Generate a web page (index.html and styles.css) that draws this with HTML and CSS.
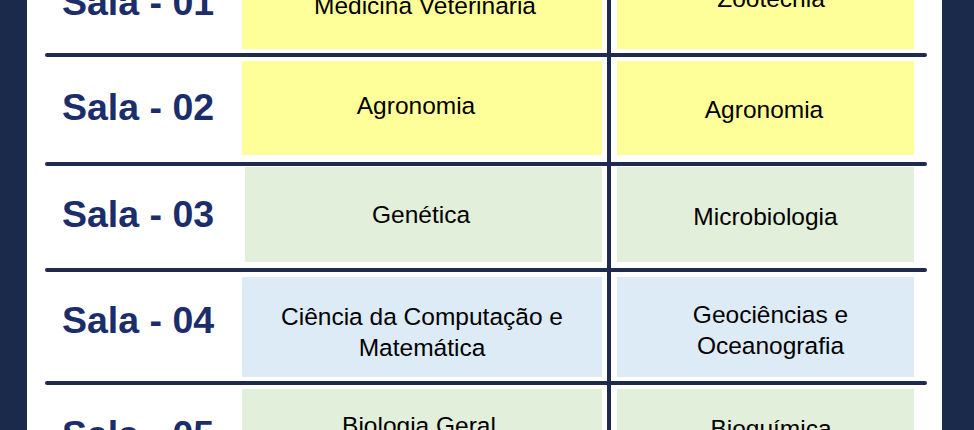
FILE: index.html
```html
<!DOCTYPE html>
<html lang="pt-BR">
<head>
<meta charset="utf-8">
<title>Salas</title>
<link rel="stylesheet" href="styles.css">
</head>
<body>
<div class="panel">
  <div class="table">
    <div class="vline"></div>

    <div class="label r1">Sala - 01</div>
    <div class="cell c1 r1 yellow pt8 pl6"><span>Medicina Veterinaria</span></div>
    <div class="cell c2 r1 yellow pb6 pl11"><span>Zootecnia</span></div>
    <div class="hline l1"></div>

    <div class="label r2 lab-low">Sala - 02</div>
    <div class="cell c1 r2 yellow pb6 pr12"><span>Agronomia</span></div>
    <div class="cell c2 r2 yellow pt3 pr3"><span>Agronomia</span></div>
    <div class="hline l2"></div>

    <div class="label r3">Sala - 03</div>
    <div class="cell c1 r3 green inset pr5"><span>Genética</span></div>
    <div class="cell c2 r3 green pt3"><span>Microbiologia</span></div>
    <div class="hline l3"></div>

    <div class="label r4">Sala - 04</div>
    <div class="cell c1 r4 blue pt9"><span>Ciência da Computação e<br>Matemática</span></div>
    <div class="cell c2 r4 blue pt6 pl10"><span>Geociências e<br>Oceanografia</span></div>
    <div class="hline l4"></div>

    <div class="label r5 lab-low5">Sala - 05</div>
    <div class="cell c1 r5 green top pt21 pr6"><span>Biologia Geral</span></div>
    <div class="cell c2 r5 green top pt24 pl11"><span>Bioquímica</span></div>
  </div>
</div>
</body>
</html>
```

FILE: styles.css
```css
html, body {
  margin: 0;
  padding: 0;
}

body {
  background: #1b2a4a;
  width: 974px;
  height: 430px;
  overflow: hidden;
}

.panel {
  margin-left: 27px;
  width: 915px;
  height: 430px;
  background: #ffffff;
  overflow: hidden;
  padding-left: 18px;
  box-sizing: border-box;
}

.table {
  margin-top: -46px;
  width: 882px;
  display: grid;
  grid-template-columns: 197px 360px 5px 4px 6px 297px 13px;
  grid-template-rows: 99px 4px 105px 4px 102px 4px 109px 4px 120px;
}

.vline {
  grid-column: 4;
  grid-row: 1 / -1;
  background: #1f2b4e;
}

.hline {
  grid-column: 1 / -1;
  background: #1f2b4e;
  border-radius: 2px;
  position: relative;
  z-index: 1;
}
.l1 { grid-row: 2; }
.l2 { grid-row: 4; }
.l3 { grid-row: 6; }
.l4 { grid-row: 8; }

.r1 { grid-row: 1; }
.r2 { grid-row: 3; }
.r3 { grid-row: 5; }
.r4 { grid-row: 7; }
.r5 { grid-row: 9; }

.label {
  grid-column: 1;
  padding-left: 17px;
  padding-top: 30px;
  font-family: "Liberation Sans", Arial, sans-serif;
  font-weight: bold;
  font-size: 37.5px;
  line-height: 37.5px;
  color: #1b2d6b;
  white-space: nowrap;
}
.lab-low { padding-top: 32px; }
.lab-low5 { padding-top: 31px; }

.cell {
  display: flex;
  align-items: center;
  justify-content: center;
  text-align: center;
  box-sizing: border-box;
  font-family: "Liberation Sans", Arial, sans-serif;
  font-size: 24.5px;
  line-height: 31px;
  color: #000000;
}
.cell.top { align-items: flex-start; }

.c1 { grid-column: 2; }
.c2 { grid-column: 6; }

.cell.r1 { margin-bottom: 4.5px; }
.cell.c2.r1 { margin-bottom: 4px; }
.cell.r2 { margin-top: 4px; margin-bottom: 7px; }
.cell.r3 { margin-top: 1px; margin-bottom: 6px; }
.cell.r4 { margin-top: 5px; margin-bottom: 4px; }
.cell.r5 { margin-top: 4px; }

.inset { margin-left: 3px; }

.yellow { background: #ffff99; }
.green { background: #e2efda; }
.blue { background: #ddebf7; }

.pt3 { padding-top: 3px; }
.pt6 { padding-top: 6px; }
.pt8 { padding-top: 8px; }
.pt9 { padding-top: 9px; }
.pt21 { padding-top: 21px; }
.pt24 { padding-top: 24px; }
.pb6 { padding-bottom: 6px; }
.pl6 { padding-left: 6px; }
.pl10 { padding-left: 10px; }
.pl11 { padding-left: 11px; }
.pr3 { padding-right: 3px; }
.pr5 { padding-right: 5px; }
.pr6 { padding-right: 6px; }
.pr12 { padding-right: 12px; }
```
